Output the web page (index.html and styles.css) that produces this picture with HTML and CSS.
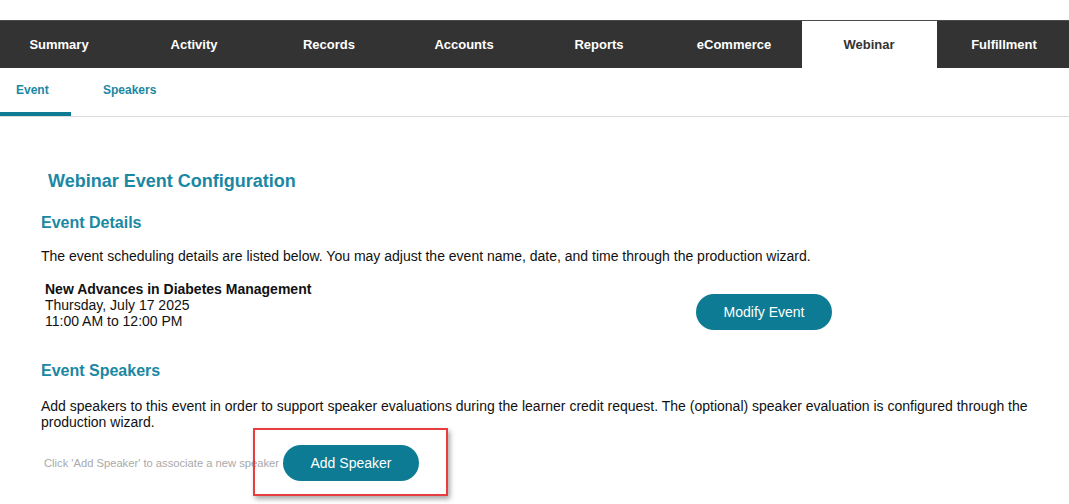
FILE: index.html
```
<!DOCTYPE html>
<html lang="en">
<head>
<meta charset="utf-8">
<title>Webinar Event Configuration</title>
<link rel="stylesheet" href="styles.css">
</head>
<body>
<div class="topspace"></div>
<nav class="mainnav">
  <div class="mainnav-row">
    <a class="mtab">Summary</a>
    <a class="mtab">Activity</a>
    <a class="mtab">Records</a>
    <a class="mtab">Accounts</a>
    <a class="mtab">Reports</a>
    <a class="mtab">eCommerce</a>
    <a class="mtab active">Webinar</a>
    <a class="mtab">Fulfillment</a>
  </div>
</nav>
<div class="subnav">
  <a class="stab stab-event active">Event</a>
  <a class="stab stab-speakers">Speakers</a>
</div>
<main class="content">
  <h1 class="page-title">Webinar Event Configuration</h1>
  <h2 class="section-title">Event Details</h2>
  <p class="text first-text">The event scheduling details are listed below. You may adjust the event name, date, and time through the production wizard.</p>
  <div class="event-row">
    <div class="event-info">
      <div class="event-name">New Advances in Diabetes Management</div>
      <div>Thursday, July 17 2025</div>
      <div>11:00 AM to 12:00 PM</div>
    </div>
    <button class="pill">Modify Event</button>
  </div>
  <h2 class="section-title speakers-title">Event Speakers</h2>
  <p class="text speakers-text">Add speakers to this event in order to support speaker evaluations during the learner credit request. The (optional) speaker evaluation is configured through the production wizard.</p>
  <div class="speaker-row">
    <span class="hint">Click 'Add Speaker' to associate a new speaker</span>
    <div class="highlight-wrap">
      <button class="pill">Add Speaker</button>
      <div class="highlight"></div>
    </div>
  </div>
</main>
</body>
</html>
```
FILE: styles.css
```
* { box-sizing: border-box; }
html, body { margin: 0; padding: 0; background: #fff; }
body {
  font-family: "Liberation Sans", Arial, sans-serif;
  color: #111;
  overflow: hidden;
  width: 1069px;
  height: 504px;
}
.topspace { height: 20px; }
.mainnav {
  background: #333333;
  border-top: 1px solid #4a4a4a;
  height: 48px;
  overflow: hidden;
}
.mainnav-row {
  display: grid;
  grid-template-columns: repeat(8, 135px);
  margin-left: -8.5px;
  height: 47px;
}
.mtab {
  display: flex;
  align-items: center;
  justify-content: center;
  color: #fff;
  font-weight: bold;
  font-size: 13px;
}
.mtab.active {
  background: #fff;
  color: #333;
}
.subnav {
  display: flex;
  height: 49px;
  border-bottom: 1px solid #dcdcdc;
}
.stab {
  display: flex;
  align-items: center;
  height: 48px;
  font-size: 12px;
  font-weight: bold;
  color: #1a88a3;
  padding-bottom: 5px;
}
.stab-event {
  width: 71px;
  padding-left: 16px;
}
.stab-event.active {
  border-bottom: 4px solid #0e7b93;
  padding-bottom: 1px;
}
.stab-speakers { padding-left: 32px; }
.content {
  padding: 0 20px 0 41px;
}
.page-title {
  margin: 53px 0 0 7px;
  font-size: 18px;
  line-height: 22px;
  font-weight: bold;
  color: #1a88a3;
}
.section-title {
  margin: 21px 0 0 0;
  font-size: 16px;
  line-height: 20px;
  font-weight: bold;
  color: #1a88a3;
}
.text {
  margin: 15px 0 0 0;
  font-size: 14px;
  line-height: 16px;
  color: #111;
}
.event-row {
  display: flex;
  align-items: flex-end;
  margin-top: 17px;
}
.event-info {
  width: 655px;
  padding-left: 4px;
  font-size: 14px;
  line-height: 16px;
}
.event-name { font-weight: bold; }
.pill {
  width: 136px;
  height: 36px;
  border: none;
  border-radius: 18px;
  background: #0c7b93;
  color: #fff;
  font-family: "Liberation Sans", Arial, sans-serif;
  font-size: 14px;
  padding: 0;
  margin-bottom: -1px;
}
.speakers-title { margin-top: 32px; }
.speakers-text { margin-top: 17px; }
.speaker-row {
  display: flex;
  align-items: center;
  margin-top: 15px;
}
.hint {
  font-size: 11.2px;
  color: #a9a9a9;
  padding-left: 3px;
  margin-right: 4px;
  white-space: nowrap;
}
.highlight-wrap { position: relative; }
.highlight-wrap .pill { display: block; margin: 0; }
.highlight {
  position: absolute;
  left: -30px;
  top: -17px;
  width: 195px;
  height: 68px;
  border: 2px solid #e83d40;
  box-shadow: 2px 3px 5px rgba(0,0,0,0.35);
  pointer-events: none;
}
```
